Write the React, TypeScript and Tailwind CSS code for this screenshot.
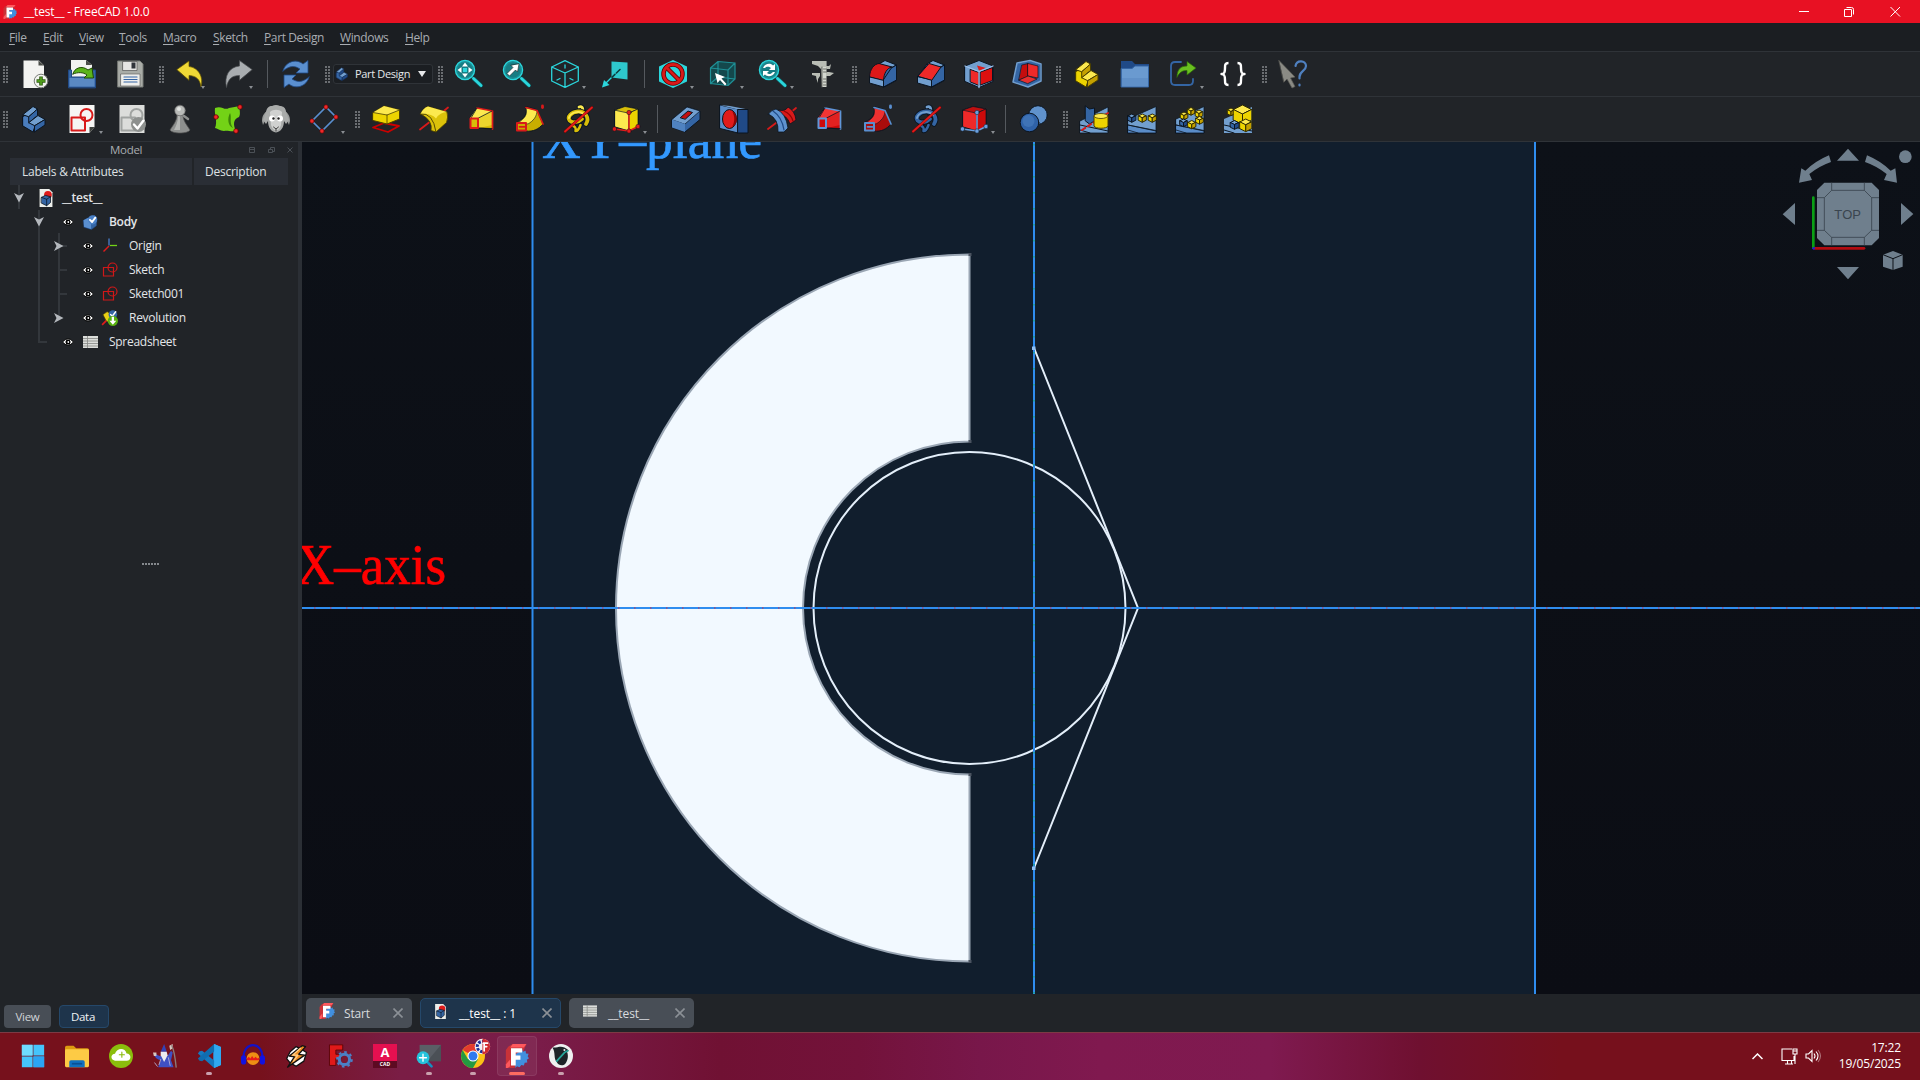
import React from "react";

type Kids = { children?: React.ReactNode };

const B = "#3465a4";
const BL = "#729fcf";
const BD = "#204a87";
const K = "#0b1521";
const Y = "#edd400";
const YL = "#fce94f";
const YD = "#c4a000";
const R = "#cc0000";
const RL = "#ef2929";
const T = "#2bd6dc";

function I({ children, c = "", size = "size-7" }: Kids & { c?: string; size?: string }) {
  return (
    <svg viewBox="0 0 28 28" className={`${size} shrink-0 overflow-visible ${c}`} fill="none" strokeLinejoin="round" strokeLinecap="round">
      {children}
    </svg>
  );
}

function Btn({ children, c, drop, inner }: Kids & { c: string; drop?: boolean; inner?: boolean }) {
  return (
    <div className={`relative size-7 shrink-0 ${c}`}>
      <I>{children}</I>
      {drop && (
        <span
          className={`absolute -bottom-px h-0 w-0 border-x-2 border-t-[3px] border-x-transparent border-t-[#8a8e93] ${inner ? "-right-[1px]" : "-right-[7px]"}`}
        />
      )}
    </div>
  );
}

function Grip({ c }: { c: string }) {
  return (
    <div className={`grid shrink-0 grid-cols-2 gap-x-px gap-y-px ${c}`}>
      {Array.from({ length: 12 }).map((_, i) => (
        <span key={i} className="h-[2px] w-[2px] bg-[#6b6e72]" />
      ))}
    </div>
  );
}

const Sep = ({ c }: { c: string }) => <div className={`h-7 w-px shrink-0 bg-[#55595e] ${c}`} />;

function Cube({ x, y, s, l = YL, m = Y, d = YD, k = "#302b00" }: { x: number; y: number; s: number; l?: string; m?: string; d?: string; k?: string }) {
  return (
    <g transform={`translate(${x} ${y}) scale(${s})`} stroke={k} strokeWidth={1 / s}>
      <path d="M0 2.5 5 0l5 2.5-5 2.5z" fill={l} />
      <path d="M0 2.5 5 5v6L0 8.500z" fill={m} />
      <path d="M10 2.500 5 5v6l5-2.500z" fill={d} />
    </g>
  );
}

function Lens({ children }: Kids) {
  return (
    <g>
      <path d="M18.500 18.500 26 25.500" stroke="#0d5c60" strokeWidth="4" />
      <path d="M18.500 18.500 26 25.500" stroke={T} strokeWidth="2.800" />
      <circle cx="10" cy="10" r="9.600" fill="#1b8f96" stroke={T} strokeWidth="1.300" />
      <circle cx="10" cy="10" r="7.500" fill="#177c83" />
      {children}
    </g>
  );
}

function Stairs({ l, m, d, k }: { l: string; m: string; d: string; k: string }) {
  return (
    <g stroke={k} strokeWidth="1">
      <path d="M3 11.500 13 17v9.500L3 21z" fill={m} />
      <path d="M3 11.500 11 7l3 2-5 5 4 3 3 1.500-3 8.500L3 21z" fill={m} />
      <path d="M3 9.500 13 1.500l4.500 2.500L9 11.500z" fill={l} />
      <path d="M9 11.500 17.500 4v6.500L9 17.500z" fill={d} />
      <path d="M9 17.500 18 10.500l7 4-10 6z" fill={l} />
      <path d="M15 20.500 25 14.500v5.500L14.500 27z" fill={d} />
    </g>
  );
}

function SketchShapes({ c }: { c: string }) {
  return (
    <g stroke={c} strokeWidth="2">
      <rect x="3.500" y="12.500" width="13.500" height="13" />
      <circle cx="18.500" cy="10" r="6" />
    </g>
  );
}

function Loft({ f, f2, o }: { f: string; f2: string; o: string }) {
  return (
    <g>
      <path d="M9 3 24.500 6v18L10 23 2 13.500z" fill={f2} stroke={K} />
      <path d="M9 3 24.500 6 11 13H2z" fill={f} />
      <path d="M11 13 24 6.500V20l-13 3z" fill={f} opacity=".55" />
      <path d="M9 3 24.500 6v18" stroke={o} strokeWidth="1.700" />
      <path d="M9 3 3 13M24 6 10.500 13M24 23.500 10 23" stroke={K} strokeWidth=".800" />
      <rect x="2.500" y="13.500" width="7.500" height="9.500" stroke={o} strokeWidth="2" fill={f2} />
    </g>
  );
}

function Sweep({ f, f2, o }: { f: string; f2: string; o: string }) {
  return (
    <g>
      <path d="M10 2c2 7-2 12-9 15l9 9c7 1 13-2 17-7L21 5z" fill={f2} stroke={K} />
      <path d="M10 3c2 7-2 11-7 14l9 2c5-3 9-7 9-13.500z" fill={f} stroke={K} strokeWidth=".600" />
      <path d="M10 2.500 21 5.500 27 19" stroke={o} strokeWidth="1.700" />
      <rect x="1" y="18" width="9" height="7.500" stroke={o} strokeWidth="2" fill={f2} />
      <path d="M3.500 21.800h5" stroke={o} strokeWidth="1.800" />
      <path d="M26.500 1v1.500" stroke={o} strokeWidth="2.800" />
    </g>
  );
}

function Helix({ f, f2 }: { f: string; f2: string }) {
  return (
    <g>
      <path d="M15 2c4-2 6 4 2 7" stroke={K} strokeWidth="4.500" />
      <path d="M15 2c4-1.500 5 3 2 6" stroke={f} strokeWidth="2.800" />
      <path d="M8 20.500c4 1 4 3 3.500 5.500 3 0 4-3 5-6" stroke={K} strokeWidth="4.500" />
      <path d="M8 20.500c4 1 4 3 3.500 5.500 3 0 4-3 5-6" stroke={f2} strokeWidth="2.500" />
      <path d="M22 19c4-6-1-13-8-12.500C7 7 3 12 5.500 15.500c2.500 3 9 2 12.500-1.500" stroke={K} strokeWidth="5.500" />
      <path d="M22 19c4-6-1-13-8-12.500C7 7 3 12 5.500 15.500c2.500 3 9 2 12.500-1.500" stroke={f2} strokeWidth="3.800" />
      <path d="M5 13c1-5 10-9 16-3" stroke={f} strokeWidth="2" />
      <path d="M1 26.500 28 2.500" stroke="#7a0000" strokeWidth="2.600" />
      <path d="M1 26.500 28 2.500" stroke="#e01b1b" strokeWidth="1.800" />
    </g>
  );
}

function Prim({ l, m, d, o }: { l: string; m: string; d: string; o: string }) {
  return (
    <g>
      <path d="M3 5 13 1.500 26 4v18L17 26 3 22z" fill={m} stroke={K} />
      <path d="M3 5 13 1.500 26 4 17 8z" fill={l} stroke={K} strokeWidth=".700" />
      <path d="M17 8 26 4v18l-9 4z" fill={d} stroke={K} strokeWidth=".700" />
      <path d="M17 7.500V26M2.500 24 17 26l9-4.500" stroke={o} strokeWidth="1.500" />
      {[[17, 7.500], [17, 26], [2.500, 24], [26, 21.500]].map(([x, y]) => (
        <circle key={`${x}-${y}`} cx={x} cy={y} r="2.200" fill={o} stroke={K} strokeWidth=".500" />
      ))}
    </g>
  );
}

function Wedge({ chamfer }: { chamfer?: boolean }) {
  return (
    <g stroke={K}>
      <path d="M14.500 27 .500 23v-6L10 4 16 1l11.500 4v15z" fill={B} />
      <path d="M.500 17v6L14.500 27v-7z" fill={BL} />
      <path d="M10 4 16 .500 27.500 5l-5 2.500z" fill={BL} />
      <path d="M14.500 20V27L27.500 20V5l-5 3z" fill={B} />
      {chamfer ? (
        <path d="M1 16 12 3.500 24 7 15 20z" fill={RL} />
      ) : (
        <path d="M.500 16.500C1 9 5 4 10 3.500l13 3.500c-5 1-8 6-8.500 13z" fill="#dc1818" />
      )}
    </g>
  );
}

function Doc({ bg = "#f3f3f1", fold = "#4a4d48" }: { bg?: string; fold?: string }) {
  return (
    <g>
      <path d="M2.500.500h15.500l5 5V28h-20.500z" fill={bg} />
      <path d="M17.500.500v5h5.500z" fill={fold} />
    </g>
  );
}

function BasePlate() {
  return (
    <g stroke={K} strokeWidth=".800">
      <path d="M0 14 28 1.500V28H0z" fill={BL} />
      <path d="M0 20 28 25.500V28H0z" fill="#5a8cc8" />
      <path d="M0 20 28 26M0 25l10 3" stroke={K} />
    </g>
  );
}

function FcLogo({ size = "size-6", c = "" }: { size?: string; c?: string }) {
  return (
    <I size={size} c={c}>
      <path d="M4 3 9 0h16l-5 12-9 16H1V7z" fill="#c93238" />
      <path d="M9 0h16l-3 4H6z" fill="#ff585d" />
      <path d="M1 24 6 18v8l-3 2H1z" fill="#ff585d" />
      <path d="m17 9 3-3 1 3 3-1 .500 3 3 .500-1 3 1.500 2-2.500 2 .500 3-3 .500-1 3-3-.500-2 2.500-3-1-2 2V12z" fill="#418fde" />
      <path d="M7 5h13v5h-7.500v3.500H18v5h-5.500V25H7z" fill="#fff" />
    </I>
  );
}

function PartDoc({ size = "size-4" }: { size?: string }) {
  return (
    <I size={size}>
      <path d="M4 0h15l5 5v23H4z" fill="#eceeea" />
      <circle cx="17" cy="9" r="6" fill="#e01b1b" />
      <path d="m7 13 6-3 8 2v9l-6 5-8-4z" fill={B} stroke={K} strokeWidth="1.200" />
      <path d="m7 13 8 3 6-4M15 16v10" stroke={K} strokeWidth="1.200" />
    </I>
  );
}

function SheetIcon({ c }: { c: string }) {
  return (
    <svg viewBox="0 0 15 12" className={c}>
      <path d="M0 0h15v12H0z" fill="#dcdedb" />
      <path d="M0 2.500h15M0 5h15M0 7.500h15M0 10h15M4.500 0v12" stroke="#858884" strokeWidth=".800" />
    </svg>
  );
}

const menus: [string, string][] = [
  ["File", "w-[34px]"],
  ["Edit", "w-[36px]"],
  ["View", "w-[40px]"],
  ["Tools", "w-[44px]"],
  ["Macro", "w-[50px]"],
  ["Sketch", "w-[51px]"],
  ["Part Design", "w-[76px]"],
  ["Windows", "w-[65px]"],
  ["Help", "w-[40px]"],
];

function ToolbarOne() {
  return (
    <div className="flex h-[45px] items-center border-t border-[#2f3338] bg-[#212428]">
      <Grip c="ml-[3px]" />
      <Btn c="ml-[13px]">
        <Doc />
        <circle cx="20" cy="21" r="6.800" fill="#f3f3f1" stroke="#777b75" />
        <path d="M20 16.500v9M15.500 21h9" stroke="#2e5e10" strokeWidth="3.600" strokeLinecap="butt" />
        <path d="M20 17.200v7.600M16.200 21h7.600" stroke="#4f9a1c" strokeWidth="2" strokeLinecap="butt" />
      </Btn>
      <Btn c="ml-[19px]">
        <path d="M3 0h15l6 5v17H3z" fill="#f3f3f1" />
        <path d="M18 0v5h6" fill="#4a4d48" />
        <path d="M.500 27.500V10h3v7h21v-7h3v17.500z" fill={B} stroke={BD} />
        <path d="M1.500 18h25v8.500h-25z" fill="#5a89c2" />
        <path d="M5 14c1-6 9-9 15-4l4-2 1.500 10H16l3-3c-4-3-9-3-14-1z" fill="#5bb41a" stroke="#1f4a04" />
      </Btn>
      <Btn c="ml-5">
        <path d="M2 1h22l3 3v23H2z" fill="#a9aca7" stroke="#777a76" />
        <rect x="7" y="1.500" width="14" height="9" fill="#e6e6e4" stroke="#555" strokeWidth=".700" />
        <rect x="15.500" y="2.500" width="4" height="6" fill="#30343a" />
        <rect x="5" y="14" width="19" height="12" fill="#eeeeec" stroke="#666" strokeWidth=".700" />
        <path d="M8 17h13M8 19.500h13M8 22h13" stroke={B} strokeWidth="1.200" />
      </Btn>
      <Grip c="ml-[15px]" />
      <Btn c="ml-3" drop inner>
        <path d="M1 9.500 13 1v5.500c9 1 15 10 12 20.500-1-8-5-11-12-11.500V20z" fill="#f0d936" stroke="#6b5a00" strokeWidth=".700" />
      </Btn>
      <Btn c="ml-5" drop inner>
        <path d="M28 9.500 15.500.500V6C5 7 0 16 2.500 27.500 4 19 8 15.500 15.500 15.500V20z" fill="#a9adb0" stroke="#4a4d50" strokeWidth=".700" />
      </Btn>
      <Sep c="ml-[15px]" />
      <Btn c="ml-3.5">
        <path d="M1 11C3 2 14-2 21 4l5-3.500v12.500H14l4-4c-6-4-11-3-17 2z" fill="#5a8fd0" stroke={BD} strokeWidth=".800" />
        <path d="M27 17c-2 9-13 13-20 7l-5 3.500V15h12l-4 4c6 4 11 3 17-2z" fill="#5a8fd0" stroke={BD} strokeWidth=".800" />
      </Btn>
      <Grip c="ml-[15px]" />
      <div className="ml-[3px] flex h-5 w-[100px] items-center rounded-[3px] border border-[#2f3338] bg-[#1b1e22]">
        <I size="size-[14px]" c="ml-px">
          <Stairs l={BL} m={B} d={BD} k="#16305a" />
        </I>
        <span className="ml-[6px] w-[58px] text-[11px] tracking-[-0.35px] whitespace-nowrap text-[#e6e8ea]">Part Design</span>
        <span className="ml-[5px] h-0 w-0 border-x-4 border-t-[6px] border-x-transparent border-t-[#e6e8ea]" />
      </div>
      <Grip c="ml-[5px]" />
      <Btn c="ml-3">
        <Lens>
          <path d="M10 2.500 13 6.500H7zM10 17.500 13 13.500H7zM2.500 10 6.500 7v6zM17.500 10 13.500 7v6z" fill="#fff" />
          <path d="M8 8h4v4H8z" fill={T} />
        </Lens>
      </Btn>
      <Btn c="ml-5">
        <Lens>
          <path d="M16 4 14.500 12 12.500 10 6.500 16 4 13.500 10 7.500 8 5.500z" fill="#fff" stroke="#222" strokeWidth=".600" />
        </Lens>
      </Btn>
      <Btn c="ml-5" drop>
        <path d="M14 .700 27.300 7v14L14 27.300.700 21V7zM.700 7 14 13 27.300 7M14 13v14.300M14 5v3M6 20l3-1.500M22 20l-3-1.500" stroke={T} strokeWidth="1.300" />
      </Btn>
      <Btn c="ml-[23px]">
        <path d="M9.500 1.500 25.500 2.500v17l-16-2z" fill="#2ec8cd" />
        <path d="M18 9.500 3 24" stroke="#0b3b3e" strokeWidth="1.500" strokeDasharray="5 2" />
        <path d="M9 18 3 24" stroke={T} strokeWidth="1.300" />
        <path d="M0 27.500 2 20l5.500 5z" fill={T} />
      </Btn>
      <Sep c="ml-3.5" />
      <Btn c="ml-3.5" drop>
        <path d="M14 0 28 6.500v15L14 28 0 21.500v-15z" fill={T} />
        <circle cx="14" cy="14" r="9.500" stroke="#5d0000" strokeWidth="4.500" />
        <path d="M7.500 7.500 20.500 20.500" stroke="#5d0000" strokeWidth="4.500" />
        <circle cx="14" cy="14" r="9.500" stroke="#d81919" strokeWidth="2.800" />
        <path d="M7.500 7.500 20.500 20.500" stroke="#d81919" strokeWidth="2.800" />
      </Btn>
      <Btn c="ml-[22px]" drop>
        <path d="M1.500 8 9 1.500 26 3v16l-7 6.500-17.500-2z" fill="#14484c" />
        <path d="M1.500 8 9 1.500 26 3v16l-7 6.500-17.500-2zM1.500 8l17.500 2 7-7M19 10v15.500M9 1.500V17l17 2M9 17l-7.500 6.500" stroke="#1f9096" strokeWidth="1.200" />
        <path d="m6 13 10 4-3.500 1.500 5 5.500-1.500 1.500-5-5.500L8.500 23z" fill="#fff" />
      </Btn>
      <Btn c="ml-[22px]" drop>
        <Lens>
          <path d="M4 8c2-5 8-5 10-2.500l2-1.500v6h-6l2-2c-2-2-5-1.500-6 0zM16 12c-2 5-8 5-10 2.500L4 16v-5h6l-2 2c2 2 4 1 6-1z" fill="#fff" />
        </Lens>
      </Btn>
      <Btn c="ml-[22px]">
        <path d="M12 1h5.500v26H13z" fill="#d3d7cf" />
        <path d="M3 1h14v5h3l2-2-1 5h-4V7h-5v2L9 6 3 4z" fill="#b9bdb5" />
        <path d="M3 13h8v3l-2 3v4l-1.500-4-.500-3-4-1zM17 12h3l5 1-4 3h-4z" fill="#b9bdb5" />
        <path d="M14.500 9h3M14.500 12h3M14.500 19h3M14.500 22h3M14.500 25h3M13 7v20" stroke="#6a6d66" />
      </Btn>
      <Grip c="ml-[15px]" />
      <Btn c="ml-3"><Wedge /></Btn>
      <Btn c="ml-5"><Wedge chamfer /></Btn>
      <Btn c="ml-5">
        <path d="M0 6 14 .500 28 6v15.500L14 27.500 0 21.500z" fill={BL} stroke={K} />
        <path d="M5.500 9.500 14 12.500v13L5.500 22z" fill={RL} stroke={K} />
        <path d="M15.500 12 27.500 7.500v13L15.500 25z" fill="#dc1010" stroke={K} />
        <path d="M12 5.500 21 8l-7 2.800z" fill="#e01b1b" />
        <path d="M0 6 14 11.500 28 6M14 11.500v16" stroke="#9cc0ea" strokeWidth="1.300" />
      </Btn>
      <Btn c="ml-5">
        <path d="M4 3 17 .500 28 4v17L15 27.500 0 22z" fill={B} stroke={K} />
        <path d="M4 3 17 .500 28 4M4 3 0 22l15 5 13-6V4" stroke={BL} strokeWidth="1.500" />
        <path d="M9 5 15 3.500v13L6 20z" fill="#c40d0d" stroke={K} strokeWidth=".700" />
        <path d="M15 3.500 25 6v12l-10-2z" fill={RL} stroke={K} strokeWidth=".700" />
        <path d="M6 20 15 16l9 3-9 4.500z" fill="#e53030" stroke={K} strokeWidth=".700" />
      </Btn>
      <Grip c="ml-[15px]" />
      <Btn c="ml-3"><Stairs l={YL} m={Y} d={YD} k="#4a3f00" /></Btn>
      <Btn c="ml-5">
        <path d="M0 1h11l3 3h14v23H0z" fill={BD} />
        <path d="M.500 8.500H11L14 6h13.500v21H.500z" fill="#6a9ad0" stroke={B} />
        <path d="M1 18h26v8.500H1z" fill="#5585c0" opacity=".5" />
      </Btn>
      <Btn c="ml-5" drop>
        <path d="M12 2H6Q2 2 2 6v15q0 4 4 4h14q4 0 4-4v-2" stroke={B} strokeWidth="1.800" />
        <path d="M8 17c0-8 4-11 10-11V1.500L27 8l-9 7v-4.500c-4 0-7 1-10 6.500z" fill="#69bf20" stroke="#2d6b06" strokeWidth=".700" />
      </Btn>
      <Btn c="ml-[22px]">
        <path d="M9.500 3C6 3 6 5 6 8c0 4-.500 6-3.500 6 3 0 3.500 2 3.500 6 0 3 0 5 3.500 5M18.500 3C22 3 22 5 22 8c0 4 .500 6 3.500 6-3 0-3.500 2-3.500 6 0 3 0 5-3.500 5" stroke="#fff" strokeWidth="2.400" strokeLinecap="butt" />
      </Btn>
      <Grip c="ml-[15px]" />
      <Btn c="ml-[11px]">
        <path d="M1 .500 17 17l-4.500 1 4.500 8.500-3 1.500-5-9-3 3z" fill="#8a8a84" stroke="#5b5b56" strokeWidth=".700" />
        <path d="M17.500 6c1-6.500 10.500-6 10.500 0 0 5-6.500 5-6.500 11v1.500M21.500 24.500v1" stroke="#4f80c0" strokeWidth="2.200" />
      </Btn>
    </div>
  );
}

function ToolbarTwo() {
  return (
    <div className="flex h-[46px] items-center border-y border-[#2f3338] bg-[#212428]">
      <Grip c="ml-[3px]" />
      <Btn c="ml-3"><Stairs l={BL} m="#4a7dbd" d={B} k={K} /></Btn>
      <Btn c="ml-5" drop>
        <path d="M1.500 0h25v22l-5 6h-20z" fill="#f6f6f4" />
        <path d="M21.500 28v-6h5z" fill="#3d403c" />
        <SketchShapes c="#d81a1a" />
      </Btn>
      <Btn c="ml-[22px]">
        <path d="M1.500 0h25v28h-25z" fill="#dcdddb" />
        <SketchShapes c="#a0a3a1" />
        <circle cx="20.500" cy="19.500" r="7.500" fill="#8d908e" />
        <path d="m16 19.500 3.500 4 6-8" stroke="#fff" strokeWidth="2.400" />
      </Btn>
      <Btn c="ml-5">
        <path d="M11 10h6c0 6 4 10 7 15-2 4-18 4-20 0 3-5 7-9 7-15z" fill="#8e908f" stroke="#555" strokeWidth=".700" />
        <path d="M12 11c0 6-2 10-4 14h6V11z" fill="#b5b7b5" />
        <circle cx="14" cy="5.500" r="5.300" fill="#b9bbb9" stroke="#666" strokeWidth=".700" />
        <circle cx="13" cy="4" r="2" fill="#e2e4e2" />
        <path d="m18 11 4 3" stroke="#8e908f" strokeWidth="2.500" />
      </Btn>
      <Btn c="ml-5">
        <path d="M1 3c7-3 9 3 14 0l11-2c-1 6 1 7-1 11-6 2-6 8-3 14-6 1-8-1-12 0-4 0-7-3-9-3 3-7-1-13 0-20z" fill="#73d216" />
        <path d="M16 8c2 4-1 10 3 15-5-2-6-9-3-15z" fill="#3c8306" />
        {[[26, 2], [2, 12], [22, 26]].map(([x, y]) => (
          <circle key={x} cx={x} cy={y} r="2.300" fill={RL} stroke="#5c0000" strokeWidth=".700" />
        ))}
      </Btn>
      <Btn c="ml-5">
        <path d="M6 5 5 11 1 20l-1-4C0 11 2 8 6 5zM22 5l1 6 4 9 1-4c0-5-2-8-6-11z" fill="#9a9c9b" />
        <path d="M4 7C5 1 9 1 10 1q4-2 8 0c3 0 6 2 6 6l3 8-3 4-2-3c0 6-3 11-8 11.500C9 27 6 22 6 16l-2 3-3-4z" fill="#a9abaa" />
        <path d="M8 7c3-3 9-3 12 0l-1 13c-2 7-8 7-10 0z" fill="#d0d1d0" />
        <circle cx="10" cy="13.500" r="3" fill="#fff" />
        <circle cx="18" cy="13.500" r="3" fill="#fff" />
        <circle cx="11.500" cy="13.500" r="1.200" fill="#222" />
        <circle cx="16.500" cy="13.500" r="1.200" fill="#222" />
        <path d="m11.500 22 2.500 2 2.500-2M14 24V26" stroke="#444" />
      </Btn>
      <Btn c="ml-5" drop>
        <path d="M16 2 26 12 12 26 2 16z" stroke="#5a8fd0" strokeWidth="1.700" />
        {[[16, 2], [26, 12], [12, 26], [2, 16]].map(([x, y]) => (
          <circle key={x} cx={x} cy={y} r="2.200" fill={RL} stroke="#5c0000" strokeWidth=".600" />
        ))}
      </Btn>
      <Grip c="ml-[17px]" />
      <Btn c="ml-3">
        <path d="M1 22.500 12 18l15 3-11 6z" stroke={R} strokeWidth="1.800" />
        <path d="M1 7.500 12 1l15.500 4v9L15 19 1 15.500z" fill={Y} stroke="#4a3f00" />
        <path d="M1 7.500 12 1l15.500 4L15 10z" fill={YL} />
        <path d="M1 7.500 15 10l12.500-5M15 10v9" stroke="#4a3f00" strokeWidth=".800" />
      </Btn>
      <Btn c="ml-5">
        <path d="M0 24.500 9 17.500M22 7.500l6-5" stroke="#d81a1a" strokeWidth="1.800" />
        <path d="M.500 9Q3 3 8 1.500L27 7q1.500 5-.500 10.500L16 27l-5-1.500Q13 15 .500 9z" fill="#dcc20a" stroke="#4a3f00" strokeWidth=".800" />
        <path d="M.500 9Q3 3 8 1.500L27 7Q20 7 16 13.500 11 8 .500 9z" fill={YL} />
        <path d="M.500 9Q13 7 16 27" stroke="#4a3f00" strokeWidth=".900" />
      </Btn>
      <Btn c="ml-5"><Loft f={YL} f2="#d8bd08" o="#e01b1b" /></Btn>
      <Btn c="ml-5"><Sweep f={YL} f2="#c9ae00" o="#d81a1a" /></Btn>
      <Btn c="ml-5"><Helix f={YL} f2="#d8bd08" /></Btn>
      <Btn c="ml-5" drop><Prim l="#d8bd08" m={YL} d={Y} o="#e01b1b" /></Btn>
      <Sep c="ml-[17px]" />
      <Btn c="ml-3.5">
        <path d="M0 14.500 15 2l13 4v8.500L13 27 0 22.500z" fill={B} stroke={K} />
        <path d="M0 14.500 15 2l13 4-15 13z" fill={BL} stroke={K} strokeWidth=".700" />
        <path d="M13 19v8L0 22.500v-8z" fill="#4f82c0" />
        <path d="M8.500 12.500 16 6l4.500 1.500-7 6.500z" fill="#c40d0d" stroke={K} />
      </Btn>
      <Btn c="ml-5">
        <path d="M0 0 18 4v24L0 23.500z" fill="#5a8cc8" stroke={K} />
        <path d="M0 0 10 1l18 3.500H18z" fill={BL} />
        <path d="M18 4.500h10V28H18z" fill={BD} stroke={K} />
        <ellipse cx="9.500" cy="14" rx="7" ry="9.500" fill="#e01b1b" stroke={K} />
        <path d="M12 6c3 5 3 11 0 16 7-3 6-13 0-16z" fill="#8d0505" />
      </Btn>
      <Btn c="ml-5">
        <path d="M0 24 8 18M22 8l6-5" stroke="#d81a1a" strokeWidth="1.800" />
        <path d="M11 5q6 2 9-3 7 4 8 13l-6 4Q19 10 11 9z" fill="#d81a1a" stroke={K} strokeWidth=".800" />
        <path d="M16 6q7 3 9 10" stroke="#8d0505" strokeWidth="1.200" />
        <path d="M.500 9Q3 5 8 4q10 4 12 19l-4 4h-6Q11 14 .500 9z" fill="#5f93d0" stroke={K} strokeWidth=".800" />
        <path d="M5 6q9 6 11 19" stroke={BD} strokeWidth="1.200" />
      </Btn>
      <Btn c="ml-5"><Loft f="#f23434" f2="#cc0a0a" o="#6096d8" /></Btn>
      <Btn c="ml-5"><Sweep f="#f03030" f2="#a90c0c" o="#5a8fd0" /></Btn>
      <Btn c="ml-5"><Helix f={BL} f2={B} /></Btn>
      <Btn c="ml-5" drop><Prim l="#c01010" m={RL} d="#cc0a0a" o="#6aa0e0" /></Btn>
      <Sep c="ml-[17px]" />
      <Btn c="ml-3.5">
        <circle cx="18" cy="10" r="9.300" fill="#6092cc" stroke={K} />
        <circle cx="9.500" cy="17.500" r="9.300" fill="#2f62a8" stroke={K} />
        <circle cx="8.500" cy="16" r="6" fill="#3f73b6" />
      </Btn>
      <Grip c="ml-[15px]" />
      <Btn c="ml-3">
        <path d="M0 16 28 2v26H0z" fill={BL} stroke={K} strokeWidth=".800" />
        <path d="M0 20l28 6M0 25l10 3" stroke={K} />
        <path d="m5.500 1 4 3 5-1v13l-5 3-4-3z" fill={B} stroke={K} />
        <path d="m2 25 26-17" stroke="#d81a1a" strokeWidth="2" strokeDasharray="4 3" />
        <path d="M14 11v10c1 3 13 3 14 0V11z" fill={Y} stroke="#4a3f00" />
        <ellipse cx="21" cy="11" rx="7" ry="2.500" fill={YL} stroke="#4a3f00" strokeWidth=".800" />
      </Btn>
      <Btn c="ml-5">
        <BasePlate />
        <Cube x={0} y={9} s={0.750} l={BL} m={B} d={BD} k={K} />
        <Cube x={10.500} y={9} s={0.750} />
        <Cube x={20.500} y={9} s={0.750} />
      </Btn>
      <Btn c="ml-5">
        <BasePlate />
        <Cube x={11.500} y={2.500} s={0.700} />
        <Cube x={19.500} y={5} s={0.700} />
        <Cube x={4.500} y={7} s={0.700} />
        <Cube x={4} y={14} s={0.700} l={BL} m={B} d={BD} k={K} />
        <Cube x={20} y={11.500} s={0.700} />
        <Cube x={12} y={15.500} s={0.750} />
      </Btn>
      <Btn c="ml-5">
        <path d="M0 14 28 2v26H0z" fill={BL} />
        <path d="M0 20l28 6M0 25l10 3" stroke={K} />
        <Cube x={3.500} y={3} s={0.700} />
        <Cube x={9.500} y={0} s={1.800} d={Y} />
        <Cube x={6.500} y={15.500} s={0.800} l={BL} m={B} d={BD} k={K} />
        <Cube x={16} y={14} s={1.150} />
      </Btn>
    </div>
  );
}

const Eye = () => (
  <svg viewBox="0 0 12 8" className="h-2 w-3 shrink-0">
    <path d="M.5 4Q6-2.500 11.500 4 6 10.500.5 4z" fill="#fff" stroke="#000" />
    <circle cx="6" cy="4" r="2.500" fill="#000" />
    <circle cx="6.300" cy="4" r=".9" fill="#fff" />
  </svg>
);

const SketchMini = () => (
  <svg viewBox="0 0 16 16" className="size-4" fill="none" stroke="#d01818" strokeWidth="1.200">
    <path d="M1.500 5.500h10v8.500h-10z" />
    <circle cx="10.500" cy="5.500" r="4.500" />
  </svg>
);

const Arrow = ({ down }: { down?: boolean }) => (
  <svg viewBox="0 0 10 10" className={down ? "size-[10px] shrink-0 rotate-90" : "size-[10px] shrink-0"}>
    <path d="M0 0 9.500 5 0 10l2.500-5z" fill="#b4b8bd" />
  </svg>
);

function TreeRow({ pad, arrow, eye = true, icon, label, bold, gap = "ml-[11px]" }: { pad: string; arrow?: "down" | "right"; eye?: boolean; icon: React.ReactNode; label: string; bold?: boolean; gap?: string }) {
  return (
    <div className={`flex h-6 items-center ${pad}`}>
      <div className="w-[10px] shrink-0">{arrow && <Arrow down={arrow === "down"} />}</div>
      {eye && (
        <div className="ml-[18px] shrink-0">
          <Eye />
        </div>
      )}
      <div className={`flex w-4 shrink-0 justify-center ${eye ? "ml-[8px]" : "ml-[14px]"}`}>{icon}</div>
      <span className={`${gap} text-[12px] whitespace-nowrap text-[#e4e6e8] ${bold ? "font-semibold tracking-[-0.3px]" : "tracking-[-0.28px]"}`}>{label}</span>
    </div>
  );
}

function ModelPanel() {
  return (
    <div className="relative flex w-[302px] shrink-0 flex-col border-r-4 border-[#2b2f35] bg-[#212428]">
      <div className="flex h-4 items-center pb-px">
        <span className="ml-[110px] w-[141px] text-[11.500px] leading-none tracking-[-0.3px] text-[#a8acb0]">Model</span>
        <svg viewBox="0 0 46 8" className="-ml-[3px] h-2 w-[46px] shrink-0" fill="none" stroke="#4b5056">
          <path d="M1.500 1.500h5v5h-5zM1 3.500h6M20.500 3.500h4v3h-4zM22.500 3V1.500h4v4H25M39.500 1.500l5 5M44.500 1.500l-5 5" />
        </svg>
      </div>
      <div className="flex h-[27px] gap-[2px] pl-[10px] text-[12px] tracking-[-0.25px] text-[#dfe1e3]">
        <div className="flex w-[182px] items-center bg-[#2a2e35] pt-px pl-3">Labels &amp; Attributes</div>
        <div className="flex w-[94px] items-center bg-[#2a2e35] pt-px pl-[11px]">Description</div>
      </div>
      <div className="relative flex flex-col pt-px">
        <div className="absolute top-0 left-[18px] h-[24px] w-[2px] bg-[#33373c]" />
        <div className="absolute top-[25px] left-[38px] h-[133px] w-[2px] bg-[#33373c]" />
        <div className="absolute top-[156px] left-[38px] h-[2px] w-[9px] bg-[#33373c]" />
        <div className="absolute top-[48px] left-[58px] h-[86px] w-[2px] bg-[#33373c]" />
        <div className="absolute top-[60px] left-[58px] h-[2px] w-[9px] bg-[#33373c]" />
        <div className="absolute top-[84px] left-[58px] h-[2px] w-[9px] bg-[#33373c]" />
        <div className="absolute top-[108px] left-[58px] h-[2px] w-[9px] bg-[#33373c]" />
        <div className="relative flex flex-col">
          <TreeRow pad="pl-[14px]" arrow="down" eye={false} icon={<PartDoc size="size-[18px]" />} label="__test__" bold gap="ml-[8px]" />
          <TreeRow
            pad="pl-[34px]"
            arrow="down"
            icon={
              <I size="size-[15px]">
                <path d="m1 10 9-5 12-4 4 5-1 14-9 7L2 23z" fill={B} stroke={BD} />
                <path d="m1 10 9-5 5 8v13L2 22z" fill="#5a8fd0" />
                <circle cx="18" cy="9" r="8.500" fill="#4a80c6" />
                <path d="m13 9 4 4 6-8" stroke="#fff" strokeWidth="3.500" />
              </I>
            }
            label="Body"
            bold
          />
          <TreeRow
            pad="pl-[54px]"
            arrow="right"
            icon={
              <svg viewBox="0 0 16 16" className="size-4" strokeWidth="1.300">
                <path d="M7 7.500V.500" stroke="#4a80d0" />
                <path d="M8 7.500h7" stroke="#73d216" />
                <path d="M7 8 1.500 13.500" stroke="#e01b1b" strokeWidth="1.500" />
              </svg>
            }
            label="Origin"
          />
          <TreeRow pad="pl-[54px]" icon={<SketchMini />} label="Sketch" />
          <TreeRow pad="pl-[54px]" icon={<SketchMini />} label="Sketch001" />
          <TreeRow
            pad="pl-[54px]"
            arrow="right"
            icon={
              <I size="size-4">
                <path d="M1 25 8 18" stroke="#e01b1b" strokeWidth="3" />
                <path d="M2 8 9 3l8 5-3 16-7-6z" fill="#e8cf15" stroke="#5a4d00" />
                <circle cx="19" cy="8" r="7.500" fill={B} />
                <path d="m15 8 3 3 6-8" stroke="#fff" strokeWidth="2.500" />
                <circle cx="19" cy="19" r="9" fill="#58b010" />
                <path d="M17 12h4v7h4l-6 7-6-7h4z" fill="#fff" />
              </I>
            }
            label="Revolution"
          />
          <TreeRow pad="pl-[34px]" icon={<SheetIcon c="h-3 w-[15px]" />} label="Spreadsheet" />
        </div>
      </div>
      <div className="flex flex-1 flex-col justify-end">
        <div className="mb-[440px] flex justify-center gap-px pl-[2px]">
          {Array.from({ length: 6 }).map((_, i) => (
            <span key={i} className="size-[2px] bg-[#85898d]" />
          ))}
        </div>
      </div>
      <div className="flex gap-2 pb-1 pl-1 text-[11.500px] tracking-[-0.3px]">
        <div className="flex h-[23px] w-[47px] items-center justify-center rounded bg-[#484e56] text-[#d0d3d6]">View</div>
        <div className="flex h-[23px] w-[50px] items-center justify-center rounded border border-[#25486a] bg-[#1e344b] pr-[2px] text-[#f0f2f4]">Data</div>
      </div>
    </div>
  );
}

function NavCube() {
  return (
    <g transform="translate(1760 130) scale(.33333)" fill="#6f7f8d">
      <path d="M264 56 297 92H231zM264 448 231 411H297zM68 253 105 219v66zM460 252 423 219v66z" />
      <circle cx="436" cy="80" r="19" />
      <path d="M207 76 213 96Q178 108 148 132L156 150 117 158 124 115 136 122Q168 92 207 76z" />
      <path d="M321 76 315 96Q350 108 380 132L372 150 411 158 406 115 392 122Q360 92 321 76z" />
      <path d="M193 158H335L357 180V324L335 346H193L171 324V180z" />
      <path
        d="M215 181H313L335 203V301L313 322H215L193 301V203zM215 158v23M313 158v23M215 322v24M313 322v24M171 203h22M171 301h22M335 203h22M335 301h22"
        fill="none"
        stroke="#39434d"
        strokeWidth="2.500"
      />
      <text x="263" y="266" textAnchor="middle" fontFamily="Liberation Sans" fontSize="39" fill="#3a454f" textLength="80">TOP</text>
      <path d="M160 203v150" stroke="#0aa014" strokeWidth="8" strokeLinecap="round" />
      <path d="M163 355H312" stroke="#b30b10" strokeWidth="8" strokeLinecap="round" />
      <circle cx="161" cy="355" r="4" fill="#2020d0" />
      <path d="M369 374 399 363 428 374V410L399 420 369 410z" />
      <path d="M369 374 399 386 428 374M399 386v34" stroke="#0d1117" strokeWidth="3" fill="none" />
    </g>
  );
}

function Viewport() {
  return (
    <svg viewBox="302 142 1618 852" className="h-[852px] w-[1618px] shrink-0 bg-[#0d1017]">
      <defs>
        <linearGradient id="bg" x1="0" y1="0" x2="0" y2="1">
          <stop offset="0" stopColor="#0d1118" />
          <stop offset="1" stopColor="#0b0d14" />
        </linearGradient>
      </defs>
      <rect x="302" y="142" width="1618" height="852" fill="url(#bg)" />
      <rect x="532" y="142" width="1003" height="852" fill="#111e2d" />
      <g fontFamily="Liberation Serif" fontSize="56" strokeWidth=".7">
        <text x="542" y="157.500" fill="#3399ff" stroke="#3399ff" textLength="220" lengthAdjust="spacingAndGlyphs">XY–plane</text>
        <text x="296" y="583.500" fill="#ff0000" stroke="#ff0000" textLength="150" lengthAdjust="spacingAndGlyphs">X–axis</text>
      </g>
      <path d="M969.500 254.500A353.500 353.500 0 0 0 969.500 961.500V774.500A166.500 166.500 0 0 1 969.500 441.500z" fill="#f2f9ff" stroke="#9aa6b4" strokeWidth="2" />
      <circle cx="969.500" cy="608" r="156" fill="none" stroke="#e4effa" strokeWidth="2" />
      <path d="M1034 348 1138 608 1034 868" fill="none" stroke="#e4effa" strokeWidth="2" />
      {[254.500, 441.500, 774.500, 961.500].map((y) => (
        <rect key={y} x="968.500" y={y - 1.500} width="3" height="3" fill="#4a5360" />
      ))}
      <path d="M532.500 142V994M1535 142V994M1034 142V994M302 608H1920" stroke="#2f8def" strokeWidth="2" />
      <path d="M314 608H1920" stroke="#9a4a80" strokeWidth="1.500" strokeDasharray="1.500 14.500" />
      <path d="M1034 144V994" stroke="#1ba68a" strokeWidth="1.500" strokeDasharray="1.500 14.500" />
      <rect x="1032" y="346.500" width="3.500" height="3.500" fill="#8fc0f5" />
      <rect x="1032" y="866.500" width="3.500" height="3.500" fill="#8fc0f5" />
      <NavCube />
    </svg>
  );
}

const CloseX = ({ c }: { c: string }) => (
  <svg viewBox="0 0 10 10" className={`size-[10px] shrink-0 ${c}`}>
    <path d="m.5.5 9 9M9.500.5l-9 9" stroke="#8b9096" strokeWidth="1.600" />
  </svg>
);

function DocTabs() {
  return (
    <div className="flex h-[38px] items-start gap-2 bg-[#212428] pt-[4px] pl-1 text-[12px] tracking-[-0.1px] text-[#d9dcdf]">
      <div className="flex h-[30px] w-[106px] items-center rounded-[5px] bg-[#484e56]">
        <FcLogo size="size-4" c="mb-1 ml-[13px]" />
        <span className="ml-[9px] flex-1 pt-[2px] tracking-[-0.2px]">Start</span>
        <CloseX c="mr-[9px]" />
      </div>
      <div className="flex h-[30px] w-[141px] items-center rounded-[5px] border border-[#25486a] bg-[#1e344b] text-white">
        <div className="mb-1 ml-[12px]">
          <PartDoc size="size-[15px]" />
        </div>
        <span className="ml-[11px] flex-1 pt-[2px] whitespace-nowrap">__test__ : 1</span>
        <CloseX c="mr-[8px]" />
      </div>
      <div className="flex h-[30px] w-[125px] items-center rounded-[5px] bg-[#484e56]">
        <SheetIcon c="mb-1 ml-[14px] h-3 w-[14px]" />
        <span className="ml-[11px] flex-1 pt-[2px]">__test__</span>
        <CloseX c="mr-[9px]" />
      </div>
    </div>
  );
}

function Slot({ children, run, active }: Kids & { run?: boolean; active?: boolean }) {
  return (
    <div className="relative flex h-full w-11 items-center justify-center pb-px">
      {active && <div className="absolute inset-x-[2px] top-[3px] bottom-1 rounded border border-white/8 bg-white/6" />}
      <div className="relative size-6">{children}</div>
      {run && <span className="absolute bottom-[5px] h-[3px] w-[6px] rounded-full bg-[#c9a0ad]" />}
      {active && <span className="absolute bottom-[5px] h-[3px] w-4 rounded-full bg-[#ff6b60]" />}
    </div>
  );
}

const s6 = "size-6";

function Taskbar() {
  return (
    <div className="flex h-12 items-center border-t border-[#7d3a44] bg-[linear-gradient(90deg,#76111c_0px,#76111c_260px,#7a1d45_400px,#7a1c49_540px,#701133_720px,#73123a_860px,#78174a_980px,#80194f_1100px,#7f1a50_1270px,#6f1030_1420px,#76101c_1560px,#76101c_1920px)] pl-[11px] text-white">
      <Slot>
        <I size={s6}>
          <path d="M1 1h12.500v12.500H1zM14.500 1H27v12.500H14.500zM1 14.500h12.500V27H1zM14.500 14.500H27V27H14.500z" fill="#45c4fb" />
          <path d="M1 1h12.500v12.500H1z" fill="#6fdcff" />
          <path d="M14.500 14.500H27V27H14.500z" fill="#2aa4f4" />
        </I>
      </Slot>
      <Slot>
        <I size={s6}>
          <path d="M0 4q0-2 2-2h8l3 3h13q2 0 2 2v6H0z" fill="#dd9a10" />
          <rect y="6" width="28" height="21" rx="1.500" fill="#fdcb45" />
          <path d="M5 27v-6q0-2 2-2h14q2 0 2 2v6z" fill="#1170c0" />
          <path d="M8 22h12v2H8z" fill="#0a4f94" />
        </I>
      </Slot>
      <Slot>
        <I size={s6}>
          <circle cx="14" cy="14" r="14" fill="#8bbd0c" />
          <path d="M7 19.500c-6-1-5-8 0-8C9 4 19 4 20.500 11c6 0 6 8.500 0 8.500z" fill="#fff" />
          <path d="M15 9.500v6M12 12.500h6" stroke="#8bbd0c" strokeWidth="1.300" />
        </I>
      </Slot>
      <Slot>
        <I size={s6}>
          <path d="m9 9 4-9 3 9z" fill="#3343b8" />
          <path d="M1 12c2-2 4 2 7 2h9l4-6 2 2-2 9 3 8H6l3-8c-4-1-7-3-8-7z" fill="#3f50c4" />
          <path d="M9 9h7l1 4-4 8-4-8z" fill="#ecebf0" />
          <path d="M0 10h4v4H1zM19 2l4-2v5l-3 2z" fill="#d8c8c0" />
          <path d="M22 2c3 6 4 15 5 25" stroke="#8c7a78" strokeWidth="1.600" />
          <path d="m2 22 3 4M7 24l2-6M18 16l2 9" stroke="#b8b4d8" />
        </I>
      </Slot>
      <Slot run>
        <I size={s6}>
          <path d="M20 0 28 3.500v21L20 28 19 20V8z" fill="#2aa5ee" />
          <path d="M20 28 1 11l2-2.500L6 8l15 12z" fill="#1579bf" />
          <path d="M20 0 1 17l2 2.500 3 .5L21 8z" fill="#0f6db0" />
          <path d="M20 0 28 3.500v21L20 28z" fill="#2fa8f0" />
        </I>
      </Slot>
      <Slot>
        <I size={s6}>
          <path d="M3 17C2-4 26-4 25 17" stroke="#1212c8" strokeWidth="2.500" />
          <ellipse cx="14" cy="17" rx="7.500" ry="7.500" fill="#ed8f13" />
          <path d="M7 17l2-2 2 2 2-3 2 3 2-2 2 2 2-1v3H7z" fill="#e81a1a" />
          <rect x="0" y="13" width="6" height="11" rx="3" fill="#1212e0" />
          <rect x="22" y="13" width="6" height="11" rx="3" fill="#1212e0" />
        </I>
      </Slot>
      <Slot>
        <I size={s6}>
          <path d="m13 3 6 3 6 4-3 10-9 6-7-4-4-5 4-8z" fill="#fff" stroke="#111" strokeWidth="1.500" />
          <path d="M20 2 5 14l6 1-8 12 20-14-7-1 8-9z" fill="#ee8e22" stroke="#111" strokeWidth="1.500" />
          <path d="m18 5-9 8h6l-5 7" stroke="#ffd08a" strokeWidth="1.500" />
        </I>
      </Slot>
      <Slot>
        <I size={s6}>
          <path d="M1 1h15v6H8v5h6v5H8v8H1z" fill="#e01919" stroke="#5a0505" />
          <circle cx="18" cy="18" r="6" stroke="#4a80c6" strokeWidth="3.500" />
          <circle cx="18" cy="18" r="8.500" stroke="#4a80c6" strokeWidth="2.500" strokeDasharray="3 3.600" strokeLinecap="butt" />
        </I>
      </Slot>
      <Slot>
        <div className="flex size-6 flex-col items-center bg-[#e51050]">
          <span className="h-[17px] text-[13px] leading-[17px] font-bold">A</span>
          <span className="h-[7px] w-full bg-[#5d0a22] text-center text-[5px] leading-[7px] font-bold">CAD</span>
        </div>
      </Slot>
      <Slot run>
        <I size={s6}>
          <path d="M3 1h25v19H3z" fill="#5a5f66" />
          <path d="M28 1v19H12z" fill="#4b5056" />
          <path d="m12 21 5 5" stroke="#1590c0" strokeWidth="3" />
          <circle cx="7" cy="16" r="7.500" fill="#25c4dc" />
          <path d="M7 12v8M3 16h8" stroke="#fff" strokeWidth="1.600" />
        </I>
      </Slot>
      <Slot run>
        <I size={s6}>
          <circle cx="14" cy="14" r="14" fill="#fbc116" />
          <path d="M14 14 1.900 7A14 14 0 0 1 26.100 7z" fill="#e33b2e" />
          <path d="M1.900 7A14 14 0 0 0 14 28L20 17.500 8 17.500z" fill="#249a41" />
          <circle cx="14" cy="14" r="6.500" fill="#fff" />
          <circle cx="14" cy="14" r="5.200" fill="#3079ee" />
          <circle cx="25" cy="3" r="9" fill="#f4f4f6" />
          <circle cx="25" cy="3" r="6" stroke="#1c2f94" strokeWidth="3.500" strokeDasharray="3 1.500" strokeLinecap="butt" />
          <path d="M25-6a9 9 0 0 1 0 18z" fill="#d02a2e" />
          <path d="M26-1h5M27-1v9M27 3h3" stroke="#fff" strokeWidth="2" />
        </I>
      </Slot>
      <Slot active>
        <FcLogo />
      </Slot>
      <Slot run>
        <I size={s6}>
          <circle cx="14" cy="14" r="14" fill="#eef0f0" />
          <path d="M4 4c5 1 8-2 14 0 2 1 4 2 5 4l-2 1c2 5 1 10-2 14-3 3-8 2-10-2C5 16 8 10 4 4z" fill="#1d2428" />
          <path d="m9 20 9-10 4-2" stroke="#26a69a" strokeWidth="2" />
          <circle cx="18" cy="7" r="1.200" fill="#eef0f0" />
        </I>
      </Slot>
      <div className="flex-1" />
      <svg viewBox="0 0 11 7" className="h-[7px] w-[11px]" fill="none" stroke="#fff" strokeWidth="1.500">
        <path d="m.5 6 5-5 5 5" />
      </svg>
      <svg viewBox="0 0 17 17" className="mb-px ml-[18px] size-[17px]" fill="none" stroke="#fff" strokeWidth="1.100">
        <path d="M11 1H1v11.500h12V8M4 16h8M6.500 12.500V16M10.500 12.500V16M12 1h4v5h-4zM14 6v10M12 3h4" />
      </svg>
      <svg viewBox="0 0 17 14" className="mb-px ml-[7px] h-[14px] w-[17px]" fill="none" stroke="#fff" strokeWidth="1.100">
        <path d="M1 5h2.500L7 1.500v11L3.500 9H1zM9 4.500q2 2.500 0 5M11 2.500q4 4.500 0 9" />
        <path d="M13 1q5 6 0 12" opacity=".4" />
      </svg>
      <div className="mr-[19px] mb-px ml-[17px] flex w-[62px] flex-col items-end text-[12px] leading-4 tracking-[-0.15px] whitespace-nowrap">
        <span>17:22</span>
        <span>19/05/2025</span>
      </div>
    </div>
  );
}

export default function App() {
  return (
    <div className="flex h-[1080px] w-[1920px] flex-col overflow-hidden bg-[#212428] font-['Open_Sans','Noto_Sans',sans-serif] select-none">
      <div className="flex h-[23px] shrink-0 items-center bg-[#e81123] text-white">
        <FcLogo size="size-[14px]" c="ml-[3px]" />
        <span className="ml-[7px] flex-1 text-[12px] tracking-[-0.22px]">__test__ - FreeCAD 1.0.0</span>
        <svg viewBox="0 0 102 12" className="mr-[19px] mb-[2px] h-3 w-[102px]" fill="none" stroke="#fff">
          <path d="M0 6.500h10M45.500 4.500h7v7h-7zM47.500 2.500h5q2 0 2 2v5M91.500 2l9.500 9.500M101 2l-9.500 9.500" />
        </svg>
      </div>
      <div className="flex h-[28px] shrink-0 items-center bg-[#1b1e22] pt-[2px] pl-[9px] text-[12px] tracking-[-0.38px] text-[#a9adb2]">
        {menus.map(([m, w]) => (
          <span key={m} className={`shrink-0 whitespace-nowrap ${w}`}>
            <span className="underline underline-offset-2">{m[0]}</span>
            {m.slice(1)}
          </span>
        ))}
      </div>
      <ToolbarOne />
      <ToolbarTwo />
      <div className="flex h-[890px] shrink-0">
        <ModelPanel />
        <div className="flex w-[1618px] flex-col">
          <Viewport />
          <DocTabs />
        </div>
      </div>
      <Taskbar />
    </div>
  );
}
